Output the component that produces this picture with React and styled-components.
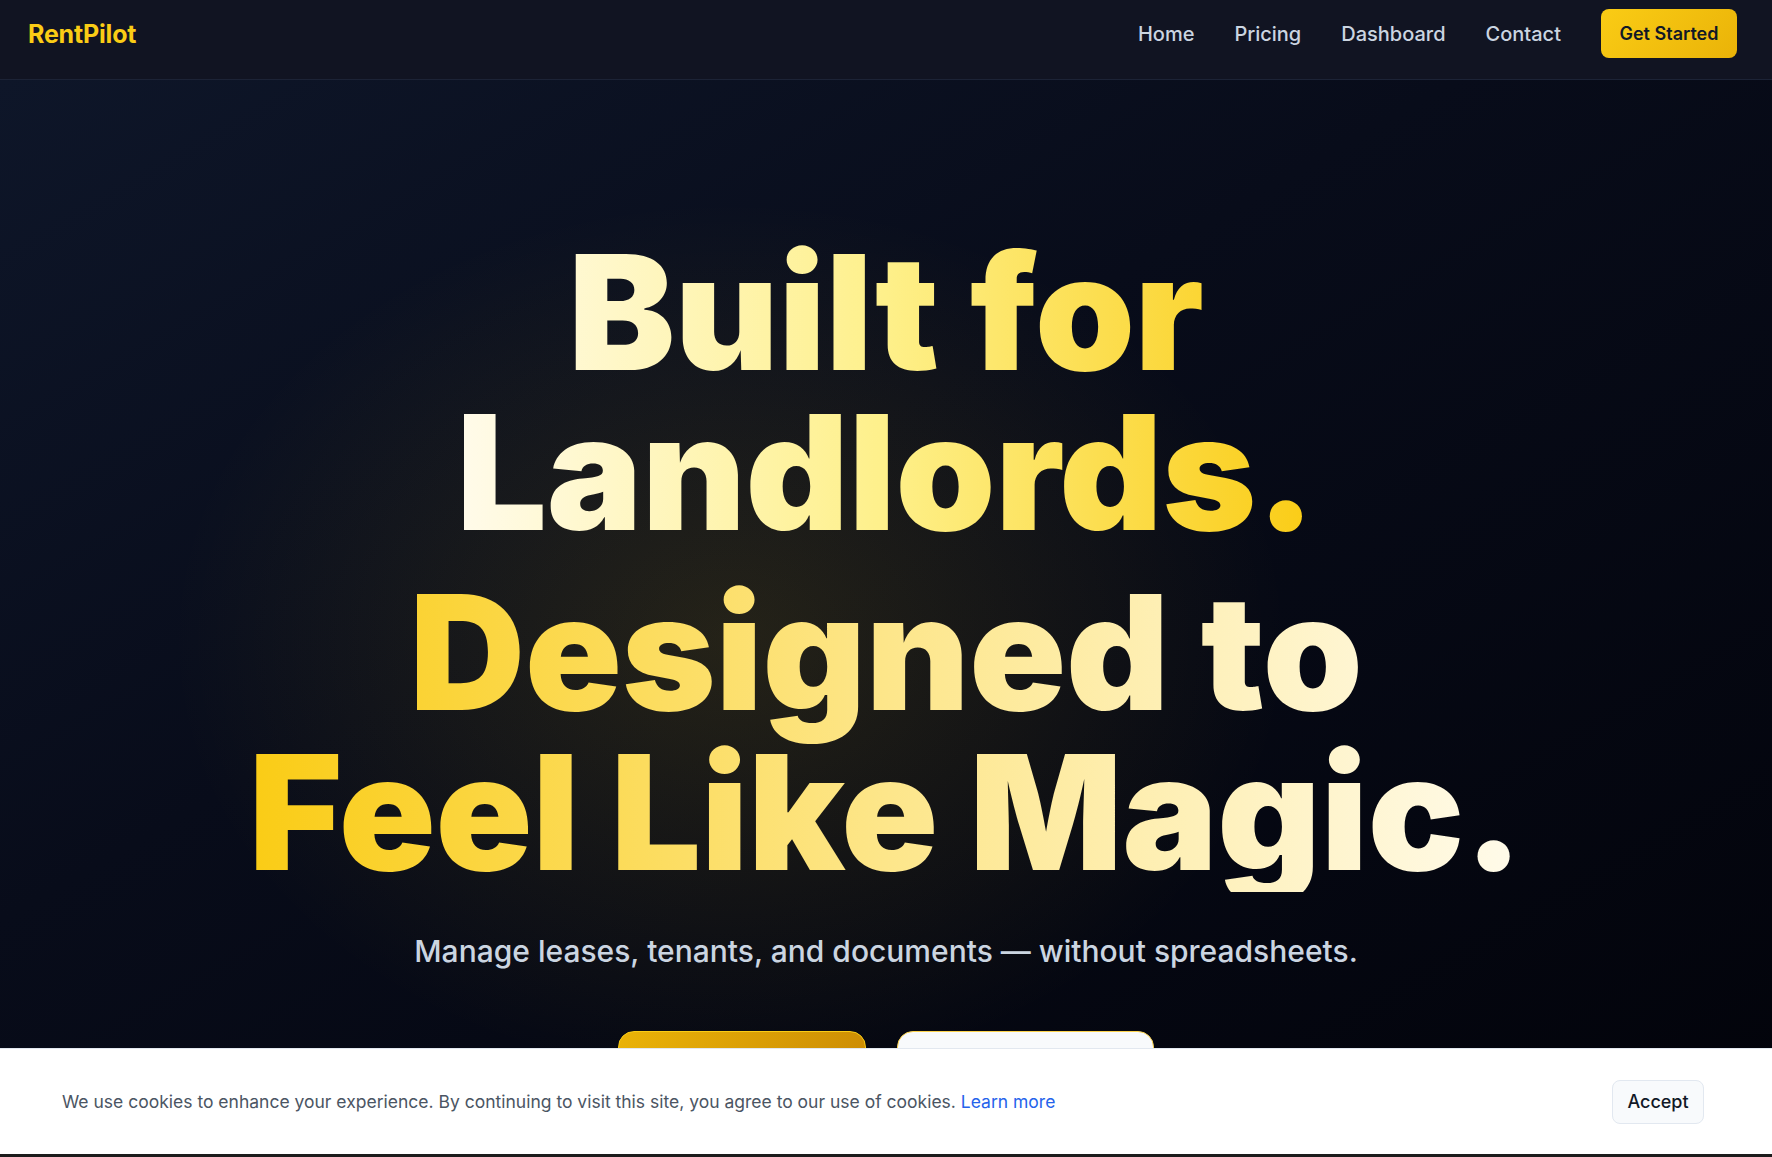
import React from 'react';
import styled, { createGlobalStyle } from 'styled-components';

const GlobalStyle = createGlobalStyle`
    * {
        box-sizing: border-box;
    }
    html, body {
        margin: 0;
        padding: 0;
        background: #02030a;
        font-family: Inter, "Noto Sans", "Liberation Sans", sans-serif;
        overflow: hidden;
    }
`

const App = () =>
{
    return (
        <Page>
            <GlobalStyle />
            <Nav>
                <Logo>RentPilot</Logo>
                <Links>
                    <NavLink href="#">Home</NavLink>
                    <NavLink href="#">Pricing</NavLink>
                    <NavLink href="#">Dashboard</NavLink>
                    <NavLink href="#">Contact</NavLink>
                    <CtaButton>Get Started</CtaButton>
                </Links>
            </Nav>
            <Hero>
                <Headline>
                    <GradientLine $from="#fffbeb" $mid="#fef08a" $to="#facc15">
                        Built for<br />Landlords.
                    </GradientLine>
                    <GradientLine $from="#facc15" $mid="#fde68a" $to="#fffbeb" $gap>
                        Designed to<br />Feel Like Magic.
                    </GradientLine>
                </Headline>
                <Subtitle>Manage leases, tenants, and documents — without spreadsheets.</Subtitle>
                <Actions>
                    <HeroButton $primary>Start Free Trial</HeroButton>
                    <HeroButton>See How It Works</HeroButton>
                </Actions>
            </Hero>
            <CookieBar>
                <CookieText>
                    We use cookies to enhance your experience. By continuing to visit this site, you agree to our use of cookies.{' '}
                    <CookieLink href="#">Learn more</CookieLink>
                </CookieText>
                <AcceptButton>Accept</AcceptButton>
            </CookieBar>
        </Page>
    );
}

const Page = styled.div`
    min-height: 100vh;
    display: flex;
    flex-direction: column;
    background: #02030a;
`

const Nav = styled.nav`
    height: 80px;
    display: flex;
    align-items: center;
    justify-content: space-between;
    padding: 0 35px 12px 28px;
    background: #111422;
    border-bottom: 1px solid #1c2336;
`

const Logo = styled.div`
    font-size: 25px;
    font-weight: 700;
    color: #facc15;
    letter-spacing: -0.2px;
`

const Links = styled.div`
    display: flex;
    align-items: center;
    gap: 40px;
`

const NavLink = styled.a`
    font-size: 20px;
    font-weight: 500;
    color: #cbd5e1;
    text-decoration: none;
`

const CtaButton = styled.button`
    height: 49px;
    padding: 0 18.5px;
    border: none;
    border-radius: 8px;
    background: linear-gradient(135deg, #facc15, #eab308);
    color: #111827;
    font-family: inherit;
    font-size: 18px;
    font-weight: 600;
    cursor: pointer;
`

const Hero = styled.section`
    flex: 1;
    display: flex;
    flex-direction: column;
    align-items: center;
    padding-top: 152px;
    background:
        radial-gradient(ellipse 560px 440px at 730px 560px, rgba(250, 204, 21, 0.12), rgba(250, 204, 21, 0) 100%),
        linear-gradient(150deg, #0e1629 0%, #080c1a 40%, #02030a 100%);
`

const Headline = styled.h1`
    margin: 0;
    text-align: center;
    font-size: 160px;
    font-weight: 900;
    line-height: 1;
    letter-spacing: -0.3px;
`

const GradientLine = styled.span`
    display: block;
    width: fit-content;
    margin: ${p => (p.$gap ? '20px' : '0')} auto 0;
    background: linear-gradient(90deg, ${p => p.$from} 0%, ${p => p.$mid} 50%, ${p => p.$to} 100%);
    -webkit-background-clip: text;
    background-clip: text;
    color: transparent;
`

const Subtitle = styled.p`
    margin: 37px 0 0;
    font-size: 30px;
    line-height: 45px;
    font-weight: 500;
    color: #cbd5e1;
`

const Actions = styled.div`
    display: flex;
    gap: 31px;
    margin-top: 57px;
`

const HeroButton = styled.button`
    height: 66px;
    padding: 0 36px;
    border-radius: 16px;
    font-family: inherit;
    font-size: 20px;
    font-weight: 600;
    cursor: pointer;
    border: 1px solid ${p => (p.$primary ? '#facc15' : '#fcd34d')};
    background: ${p => (p.$primary ? 'linear-gradient(120deg, #eab308, #ca8a04)' : '#f8fafc')};
    color: #111827;
    width: ${p => (p.$primary ? '248px' : '257px')};
`

const CookieBar = styled.div`
    position: fixed;
    left: 0;
    right: 0;
    bottom: 0;
    height: 109px;
    display: flex;
    align-items: center;
    justify-content: space-between;
    padding: 0 68px 0 62px;
    background: #ffffff;
    border-top: 1px solid #e2e8f0;
    border-bottom: 3px solid #1c1c1c;
`

const CookieText = styled.p`
    margin: 0;
    font-size: 17.5px;
    color: #4b5563;
`

const CookieLink = styled.a`
    color: #2563eb;
    text-decoration: none;
`

const AcceptButton = styled.button`
    width: 92px;
    height: 44px;
    border: 1px solid #e2e8f0;
    border-radius: 8px;
    background: #f8fafc;
    color: #111827;
    font-family: inherit;
    font-size: 18px;
    font-weight: 500;
    cursor: pointer;
`

export default App;
